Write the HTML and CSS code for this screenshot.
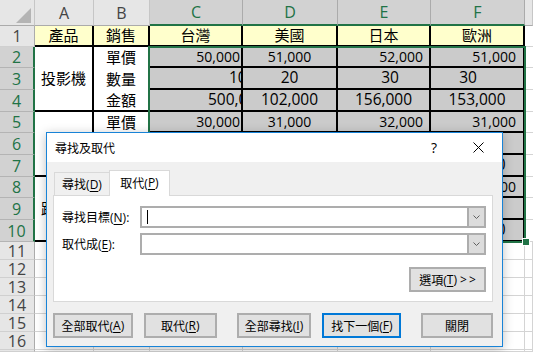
FILE: index.html
```html
<!DOCTYPE html>
<html lang="zh-Hant">
<head>
    <meta charset="UTF-8">
    <title>尋找及取代</title>
    <link rel="stylesheet" href="styles.css">
</head>
<body>
    <div class="sheet">
        <!-- 欄標題 -->
        <div class="corner">
            <svg width="35" height="26" viewBox="0 0 35 26"><polygon points="31,8 31,23 16,23" fill="#b4b4b4"/></svg>
        </div>
        <div class="ch">A</div>
        <div class="ch">B</div>
        <div class="ch sel">C</div>
        <div class="ch sel">D</div>
        <div class="ch sel">E</div>
        <div class="ch sel">F</div>
        <div class="ch"></div>

        <!-- 第 1 列 -->
        <div class="rh">1</div>
        <div class="c head">產品</div>
        <div class="c head">銷售</div>
        <div class="c head">台灣</div>
        <div class="c head">美國</div>
        <div class="c head">日本</div>
        <div class="c head">歐洲</div>
        <div class="c g"></div>

        <!-- 投影機 -->
        <div class="rh sel">2</div>
        <div class="c prod">投影機</div>
        <div class="c item">單價</div>
        <div class="c val s rt pc">50,000</div>
        <div class="c val s ctr">51,000</div>
        <div class="c val s rt pe">52,000</div>
        <div class="c val s rt pf">51,000</div>
        <div class="c g"></div>

        <div class="rh sel">3</div>
        <div class="c item">數量</div>
        <div class="c val l cut1">10</div>
        <div class="c val l ctr">20</div>
        <div class="c val l ctr qe">30</div>
        <div class="c val l ctr qf">30</div>
        <div class="c g"></div>

        <div class="rh sel">4</div>
        <div class="c item last">金額</div>
        <div class="c val l cut2">500,000</div>
        <div class="c val l ctr">102,000</div>
        <div class="c val l ctr">156,000</div>
        <div class="c val l ctr">153,000</div>
        <div class="c g"></div>

        <!-- 音響 -->
        <div class="rh sel">5</div>
        <div class="c prod">音響</div>
        <div class="c item">單價</div>
        <div class="c val s rt pc">30,000</div>
        <div class="c val s ctr">31,000</div>
        <div class="c val s rt pe">32,000</div>
        <div class="c val s rt pf">31,000</div>
        <div class="c g"></div>

        <div class="rh sel">6</div>
        <div class="c item">數量</div>
        <div class="c val l cut1">10</div>
        <div class="c val l ctr">20</div>
        <div class="c val l ctr qe">30</div>
        <div class="c val l ctr qf">30</div>
        <div class="c g"></div>

        <div class="rh sel">7</div>
        <div class="c item last">金額</div>
        <div class="c val l cut2">300,000</div>
        <div class="c val l ctr">620,000</div>
        <div class="c val l ctr">960,000</div>
        <div class="c val l ctr">930,000</div>
        <div class="c g"></div>

        <!-- 跑步機 -->
        <div class="rh sel">8</div>
        <div class="c prod">跑步機</div>
        <div class="c item">單價</div>
        <div class="c val s rt pc">33,000</div>
        <div class="c val s ctr">34,000</div>
        <div class="c val s rt pe">35,000</div>
        <div class="c val s rt pf">33,000</div>
        <div class="c g"></div>

        <div class="rh sel">9</div>
        <div class="c item">數量</div>
        <div class="c val l cut1">10</div>
        <div class="c val l ctr">20</div>
        <div class="c val l ctr qe">30</div>
        <div class="c val l ctr qf">30</div>
        <div class="c g"></div>

        <div class="rh sel">10</div>
        <div class="c item last">金額</div>
        <div class="c val l cut2">330,000</div>
        <div class="c val l ctr">680,000</div>
        <div class="c val l ctr">999,000</div>
        <div class="c val l ctr">990,000</div>
        <div class="c g"></div>

        <!-- 空白列 -->
        <div class="rh small">11</div>
        <div class="e"></div><div class="e"></div><div class="e"></div><div class="e"></div><div class="e"></div><div class="e"></div><div class="e"></div>
        <div class="rh small">12</div>
        <div class="e"></div><div class="e"></div><div class="e"></div><div class="e"></div><div class="e"></div><div class="e"></div><div class="e"></div>
        <div class="rh small">13</div>
        <div class="e"></div><div class="e"></div><div class="e"></div><div class="e"></div><div class="e"></div><div class="e"></div><div class="e"></div>
        <div class="rh small">14</div>
        <div class="e"></div><div class="e"></div><div class="e"></div><div class="e"></div><div class="e"></div><div class="e"></div><div class="e"></div>
        <div class="rh small">15</div>
        <div class="e"></div><div class="e"></div><div class="e"></div><div class="e"></div><div class="e"></div><div class="e"></div><div class="e"></div>
        <div class="rh small">16</div>
        <div class="e"></div><div class="e"></div><div class="e"></div><div class="e"></div><div class="e"></div><div class="e"></div><div class="e"></div>
        <div class="rh small"></div>
        <div class="e"></div><div class="e"></div><div class="e"></div><div class="e"></div><div class="e"></div><div class="e"></div><div class="e"></div>
    </div>

    <!-- 選取範圍 C2:F10 -->
    <div class="selection"></div>
    <div class="fill-handle"></div>

    <!-- 尋找及取代 對話方塊 -->
    <div class="dialog">
        <div class="title-bar">
            <span class="title">尋找及取代</span>
            <span class="help">?</span>
            <span class="close">
                <svg width="11" height="11" viewBox="0 0 11 11"><path d="M0.5 0.5L10.5 10.5M10.5 0.5L0.5 10.5" stroke="#000" stroke-width="1"/></svg>
            </span>
        </div>
        <div class="dialog-body">
            <div class="tabs">
                <div class="tab">尋找(<u>D</u>)</div>
                <div class="tab active">取代(<u>P</u>)</div>
            </div>
            <div class="panel">
                <div class="fields">
                    <label>尋找目標(<u>N</u>):</label>
                    <div class="combo">
                        <div class="combo-text"><span class="caret"></span></div>
                        <div class="drop"><svg width="7" height="4" viewBox="0 0 7 4"><polyline points="0.5,0.5 3.5,3.5 6.5,0.5" fill="none" stroke="#606060"/></svg></div>
                    </div>
                    <label>取代成(<u>E</u>):</label>
                    <div class="combo">
                        <div class="combo-text"></div>
                        <div class="drop"><svg width="7" height="4" viewBox="0 0 7 4"><polyline points="0.5,0.5 3.5,3.5 6.5,0.5" fill="none" stroke="#606060"/></svg></div>
                    </div>
                </div>
                <div class="options-row">
                    <button class="btn options">選項(<u>T</u>)&nbsp;<span class="arrows">&gt;&gt;</span></button>
                </div>
            </div>
            <div class="buttons">
                <button class="btn w-replace-all">全部取代(<u>A</u>)</button>
                <button class="btn w-replace">取代(<u>R</u>)</button>
                <button class="btn w-find-all">全部尋找(<u>I</u>)</button>
                <button class="btn w-find-next default">找下一個(<u>F</u>)</button>
                <button class="btn w-close">關閉</button>
            </div>
        </div>
    </div>
</body>
</html>
```

FILE: styles.css
```css
* {
    box-sizing: border-box;
}
body {
    margin: 0;
    width: 533px;
    height: 352px;
    overflow: hidden;
    position: relative;
    background-color: #fff;
    font-family: "Open Sans", "Noto Sans CJK TC", sans-serif;
    color: #000;
}

/* 工作表 */
.sheet {
    display: grid;
    grid-template-columns: 35px 59px 56px 93px 95px 93px 94px 8px;
    grid-template-rows: 26px 21px repeat(3, 21px 22px 22px) repeat(6, 18px) 2px;
}
.corner {
    background-color: #e6e6e6;
    border-right: 1px solid #c6c6c6;
    border-bottom: 1px solid #ababab;
}
.corner svg {
    display: block;
}
.ch {
    display: flex;
    align-items: center;
    justify-content: center;
    background-color: #e6e6e6;
    color: #444;
    font-size: 16px;
    border-right: 1px solid #c6c6c6;
    border-bottom: 1px solid #ababab;
}
.ch.sel {
    background-color: #d2d2d2;
    color: #217346;
    border-bottom: 2px solid #217346;
    border-right-color: #ababab;
}
.rh {
    display: flex;
    align-items: center;
    justify-content: center;
    background-color: #e6e6e6;
    color: #444;
    font-size: 16px;
    line-height: 1;
    border-right: 1px solid #ababab;
    border-bottom: 1px solid #d0d0d0;
}
.rh.sel {
    background-color: #d2d2d2;
    color: #217346;
    border-right: 2px solid #217346;
    border-bottom-color: #b4b4b4;
}
.c {
    display: flex;
    align-items: center;
    overflow: hidden;
    white-space: nowrap;
    font-size: 15px;
    line-height: 1;
}
.head {
    justify-content: center;
    background-color: #ffffcc;
    border-right: 2px solid #000;
    border-bottom: 2px solid #000;
}
.prod {
    grid-row: span 3;
    justify-content: center;
    border-right: 2px solid #000;
    border-bottom: 2px solid #000;
}
.item {
    justify-content: center;
    border-right: 2px solid #000;
}
.item.last {
    border-bottom: 2px solid #000;
}
.val {
    background-color: #cbcbcb;
    border-right: 2px solid #000;
    border-bottom: 2px solid #000;
}
.g {
    border-bottom: 1px solid #d4d4d4;
}
.e {
    border-right: 1px solid #d4d4d4;
    border-bottom: 1px solid #d4d4d4;
}

/* 數字對齊 */
.s {
    font-size: 14px;
}
.l {
    font-size: 15.5px;
}
.rt {
    justify-content: flex-end;
}
.ctr {
    justify-content: center;
}
.pc {
    padding-right: 1px;
}
.pe {
    padding-right: 6px;
}
.pf {
    padding-right: 7px;
}
.qe {
    padding-left: 13px;
}
.qf {
    padding-right: 18px;
}
.cut1 {
    padding-left: 79px;
}
.cut2 {
    padding-left: 58px;
}

/* 選取框 */
.selection {
    position: absolute;
    left: 148px;
    top: 46px;
    width: 378px;
    height: 197px;
    border: 2px solid #217346;
}
.fill-handle {
    position: absolute;
    left: 523px;
    top: 239px;
    width: 6px;
    height: 6px;
    background-color: #217346;
    outline: 1px solid #fff;
}

/* 對話方塊 */
.dialog {
    position: absolute;
    left: 46px;
    top: 132px;
    width: 457px;
    height: 215px;
    border: 1px solid #1883d7;
    background-color: #f0f0f0;
    box-shadow: 0 2px 10px rgba(0, 0, 0, 0.25);
    display: flex;
    flex-direction: column;
    font-size: 12px;
}
.title-bar {
    height: 29px;
    background-color: #fff;
    display: flex;
    align-items: center;
    padding-left: 8px;
}
.title {
    flex: 1;
}
.help {
    width: 44px;
    text-align: center;
    font-size: 14px;
}
.close {
    width: 44px;
    margin-right: 2px;
    display: flex;
    justify-content: center;
}
.close svg {
    display: block;
}
.dialog-body {
    flex: 1;
    padding: 8px 9px 0 6px;
}
.tabs {
    display: flex;
    align-items: flex-end;
    height: 25px;
    padding-left: 1px;
}
.tab {
    width: 56px;
    height: 23px;
    display: flex;
    align-items: center;
    justify-content: center;
    border: 1px solid #d9d9d9;
    border-bottom: none;
    background-color: #f0f0f0;
}
.tab.active {
    width: 61px;
    height: 26px;
    margin-left: -1px;
    margin-bottom: -1px;
    background-color: #fff;
    position: relative;
    z-index: 1;
    padding-bottom: 2px;
}
u {
    text-decoration-thickness: 1px;
    text-underline-offset: 2px;
}
.panel {
    height: 107px;
    background-color: #fff;
    border: 1px solid #d9d9d9;
    padding: 10px 6px 0 8px;
}
.fields {
    display: grid;
    grid-template-columns: 78px 1fr;
    grid-auto-rows: 22px;
    row-gap: 5px;
    align-items: center;
}
.combo {
    height: 22px;
    display: flex;
    border: 2px solid #adadad;
    background-color: #fff;
}
.combo-text {
    flex: 1;
    display: flex;
    align-items: center;
    padding-left: 5px;
}
.caret {
    width: 1px;
    height: 14px;
    background-color: #000;
}
.drop {
    width: 17px;
    display: flex;
    align-items: center;
    justify-content: center;
    background-color: #dcdcdc;
    border-left: 2px solid #adadad;
}
.drop svg {
    display: block;
}
.options-row {
    display: flex;
    justify-content: flex-end;
    margin-top: 12px;
}
.btn {
    height: 25px;
    padding: 0;
    display: flex;
    align-items: center;
    justify-content: center;
    font-family: "Open Sans", "Noto Sans CJK TC", sans-serif;
    font-size: 12px;
    color: #000;
    background-color: #e1e1e1;
    border: 2px solid #adadad;
}
.btn.default {
    border-color: #0078d7;
}
.options {
    width: 77px;
}
.arrows {
    letter-spacing: 2px;
    margin-right: -2px;
}
.buttons {
    display: flex;
    gap: 11px;
    margin-top: 11px;
}
.w-replace-all {
    width: 80px;
}
.w-replace {
    width: 73px;
}
.w-find-all {
    width: 75px;
    margin-left: 9px;
}
.w-find-next {
    width: 79px;
}
.w-close {
    width: 72px;
    margin-left: 9px;
}
```
